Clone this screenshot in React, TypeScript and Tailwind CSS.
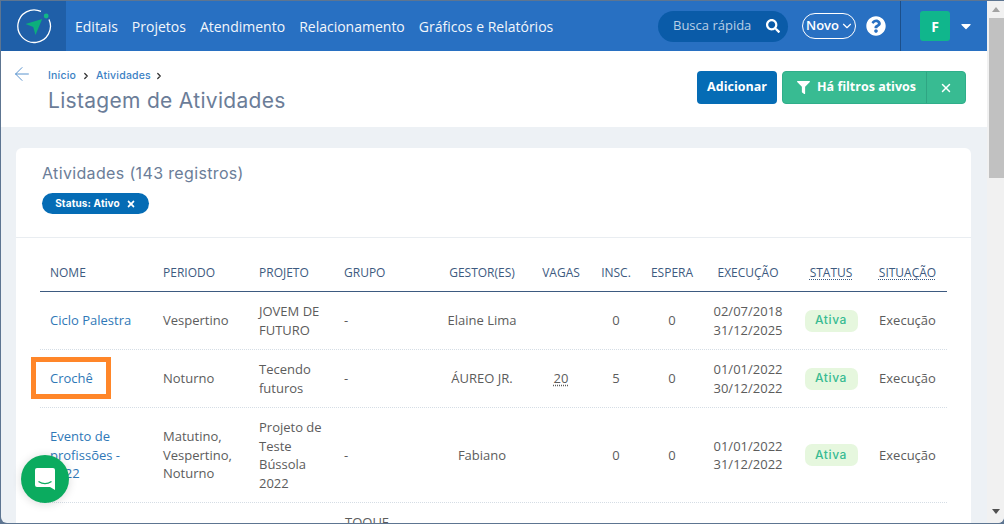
import { ArrowLeft, ChevronDown, ChevronRight, X } from "lucide-react";
import { FaQuestionCircle, FaSearch, FaTimes, FaCaretDown, FaFilter } from "react-icons/fa";

const rows = [
  {
    nome: ["Ciclo Palestra"],
    periodo: ["Vespertino"],
    projeto: ["JOVEM DE", "FUTURO"],
    gestor: "Elaine Lima",
    vagas: "",
    insc: "0",
    datas: ["02/07/2018", "31/12/2025"],
    h: "h-[58px]",
  },
  {
    nome: ["Crochê"],
    periodo: ["Noturno"],
    projeto: ["Tecendo", "futuros"],
    gestor: "ÁUREO JR.",
    vagas: "20",
    insc: "5",
    datas: ["01/01/2022", "30/12/2022"],
    h: "h-[58px]",
    destaque: true,
  },
  {
    nome: ["Evento de", "profissões -", "2022"],
    periodo: ["Matutino,", "Vespertino,", "Noturno"],
    projeto: ["Projeto de", "Teste", "Bússola", "2022"],
    gestor: "Fabiano",
    vagas: "",
    insc: "0",
    datas: ["01/01/2022", "31/12/2022"],
    h: "h-[95px]",
  },
];

function Linhas({ itens }: { itens: string[] }) {
  return (
    <>
      {itens.map((t) => (
        <div key={t}>{t}</div>
      ))}
    </>
  );
}

export default function App() {
  return (
    <div className="relative h-[524px] w-[1004px] overflow-hidden bg-[#5d7591] font-['Open_Sans',sans-serif] text-[13px]">
      <div className="absolute inset-0 mt-px ml-px mb-px flex overflow-hidden rounded-b-[6px] bg-[#edf1f5]">
        <div className="flex w-[986px] flex-col">
          {/* topo */}
          <div className="flex h-[50px] shrink-0 items-center bg-[#2870c2] text-white">
            <div className="flex h-[50px] w-[65px] items-center justify-center bg-[#1f5fa8]">
              <svg width="36" height="36" viewBox="0 0 36 36" fill="none">
                <path d="M25 3.4A16.3 16.3 0 1 0 33 11.5" stroke="white" strokeWidth="1.3" />
                <circle cx="30.2" cy="8" r="2.4" fill="#12b886" />
                <path d="M9.5 16 L26.2 11 L19.5 27 L17.2 19 Z" fill="#0cae7c" />
              </svg>
            </div>
            <nav className="ml-[9px] flex gap-[14px] text-[14px] text-[#f2f6fb]">
              <span>Editais</span>
              <span>Projetos</span>
              <span>Atendimento</span>
              <span>Relacionamento</span>
              <span>Gráficos e Relatórios</span>
            </nav>
            <div className="ml-auto flex h-[31px] w-[130px] items-center justify-between rounded-full bg-[#0a5ba8] pr-[8px] pl-[15px] text-[13px] text-[#b9cfe6]">
              <span>Busca rápida</span>
              <FaSearch className="h-[14px] w-[14px] text-white" />
            </div>
            <div className="ml-[14px] flex h-[26px] w-[54px] items-center justify-end gap-px rounded-full border border-white pr-[1px] text-[13px] font-semibold">
              Novo
              <ChevronDown className="h-[14px] w-[14px]" strokeWidth={2} />
            </div>
            <FaQuestionCircle className="ml-[10px] h-[20px] w-[20px]" />
            <div className="ml-[14px] flex h-[50px] w-[87px] items-center border-l border-[#1c4f8a] pl-[19px]">
              <div className="flex h-[30px] w-[30px] items-center justify-center rounded-[3px] bg-[#10b68c] text-[14px] font-bold">
                F
              </div>
              <FaCaretDown className="ml-[8px] h-[16px] w-[16px]" />
            </div>
          </div>

          {/* cabecalho */}
          <div className="flex h-[76px] shrink-0 bg-white">
            <ArrowLeft className="mt-[12px] ml-[10px] h-[22px] w-[22px] text-[#4c8ac9]" strokeWidth={1} />
            <div className="ml-[15px]">
              <div className="mt-[17px] flex items-center font-['Inter',sans-serif] text-[10.5px] font-medium tracking-[0.2px] text-[#3c82c4]">
                <span>Início</span>
                <ChevronRight className="mx-[5px] h-[10px] w-[10px] text-[#333]" strokeWidth={3} />
                <span>Atividades</span>
                <ChevronRight className="mx-[3px] h-[10px] w-[10px] text-[#333]" strokeWidth={3} />
              </div>
              <h1 className="mt-[5px] font-['Inter',sans-serif] text-[21px] leading-[24px] tracking-[0.3px] text-[#6b7d98]">
                Listagem de Atividades
              </h1>
            </div>
            <div className="mt-[20px] mr-[21px] ml-auto flex h-[33px] gap-[5px]">
              <div className="flex w-[80px] items-center justify-center rounded-[4px] bg-[#056cb5] text-[12.5px] font-bold text-white">
                Adicionar
              </div>
              <div className="flex w-[184px] rounded-[4px] border border-[#2fae8a] bg-[#38bb92] text-[12.5px] font-bold text-white">
                <div className="flex w-[144px] items-center justify-end gap-[7px] border-r border-[#2fa583] pr-[10px]">
                  <FaFilter className="h-[13px] w-[13px]" />
                  Há filtros ativos
                </div>
                <div className="flex flex-1 items-center justify-center">
                  <X className="h-[14px] w-[14px]" strokeWidth={2.5} />
                </div>
              </div>
            </div>
          </div>

          {/* cartao */}
          <div className="mt-[21px] mr-[16px] ml-[15px] flex-1 rounded-t-[6px] bg-white">
            <div className="h-[90px] border-b border-[#e9edf1] pt-[15px] pl-[26px]">
              <h2 className="font-['Inter',sans-serif] text-[16px] leading-[20px] tracking-[0.35px] text-[#6b7d98]">
                Atividades (143 registros)
              </h2>
              <div className="mt-[10px] flex h-[21px] w-[107px] items-center justify-center gap-[6px] rounded-full bg-[#056cb5] font-['Inter',sans-serif] text-[10px] font-bold tracking-[0.15px] text-white">
                Status: Ativo
                <FaTimes className="h-[10px] w-[10px]" />
              </div>
            </div>

            <div className="mx-[24px] mt-[15px]">
              <div className="flex h-[39px] items-center border-b border-[#3d5a80] pt-[2px] text-[12px] font-medium text-[#3d5a80]">
                <div className="w-[123px] pl-[10px]">NOME</div>
                <div className="w-[96px]">PERIODO</div>
                <div className="w-[85px]">PROJETO</div>
                <div className="w-[88px]">GRUPO</div>
                <div className="w-[100px] text-center">GESTOR(ES)</div>
                <div className="w-[58px] text-center">VAGAS</div>
                <div className="w-[52px] text-center">INSC.</div>
                <div className="w-[60px] text-center">ESPERA</div>
                <div className="w-[92px] text-center">EXECUÇÃO</div>
                <div className="w-[74px] text-center">
                  <span className="underline decoration-dotted underline-offset-2">STATUS</span>
                </div>
                <div className="flex-1 text-center">
                  <span className="underline decoration-dotted underline-offset-2">SITUAÇÃO</span>
                </div>
              </div>

              {rows.map((r) => (
                <div
                  key={r.gestor}
                  className={`flex items-center border-b border-dotted border-[#d5dde5] leading-[18.5px] text-[#5c5c5c] ${r.h}`}
                >
                  <div className="relative w-[123px] pl-[10px] text-[#2f78b7]">
                    {r.destaque && (
                      <div className="absolute top-[-12px] left-[-9px] h-[42px] w-[80px] border-[5px] border-[#ff8629]" />
                    )}
                    <Linhas itens={r.nome} />
                  </div>
                  <div className="w-[96px]">
                    <Linhas itens={r.periodo} />
                  </div>
                  <div className="w-[85px]">
                    <Linhas itens={r.projeto} />
                  </div>
                  <div className="w-[88px]">-</div>
                  <div className="w-[100px] text-center">{r.gestor}</div>
                  <div className="w-[58px] text-center">
                    {r.vagas && <span className="underline decoration-dotted underline-offset-2">{r.vagas}</span>}
                  </div>
                  <div className="w-[52px] text-center">{r.insc}</div>
                  <div className="w-[60px] text-center">0</div>
                  <div className="w-[92px] text-center">
                    <Linhas itens={r.datas} />
                  </div>
                  <div className="flex w-[74px] justify-center">
                    <span className="flex h-[22px] w-[53px] items-center justify-center rounded-[7px] bg-[#e6f7de] font-['Inter',sans-serif] text-[12px] font-medium tracking-[0.6px] text-[#38bb92]">
                      Ativa
                    </span>
                  </div>
                  <div className="flex-1 text-center">Execução</div>
                </div>
              ))}
              <div className="ml-[305px] pt-[10px] leading-[18px] text-[#5c5c5c]">TOQUE</div>
            </div>
          </div>
        </div>

        {/* barra de rolagem */}
        <div className="flex w-[17px] flex-col bg-[#f1f1f1]">
          <div className="flex h-[17px] items-center justify-center">
            <div className="h-0 w-0 border-x-[4px] border-b-[5px] border-x-transparent border-b-[#a3a3a3]" />
          </div>
          <div className="ml-[2px] h-[160px] bg-[#c1c1c1]" />
          <div className="mt-auto mb-[6px] flex h-[11px] items-center justify-center">
            <div className="h-0 w-0 border-x-[4px] border-t-[5px] border-x-transparent border-t-[#505050]" />
          </div>
        </div>
      </div>

      {/* chat */}
      <div className="absolute top-[455px] left-[21px] flex h-[48px] w-[48px] items-center justify-center rounded-full bg-[#0bab5f] shadow-[0_1px_10px_rgba(0,0,0,0.15)]">
        <svg width="22" height="24" viewBox="0 0 22 24">
          <path d="M3 1h16a2 2 0 0 1 2 2v20l-5-3H3a2 2 0 0 1-2-2V3a2 2 0 0 1 2-2z" fill="white" />
          <path d="M4.5 14.5c4 2.6 9 2.6 13 0" stroke="#0bab5f" strokeWidth="1.3" fill="none" />
        </svg>
      </div>
    </div>
  );
}
